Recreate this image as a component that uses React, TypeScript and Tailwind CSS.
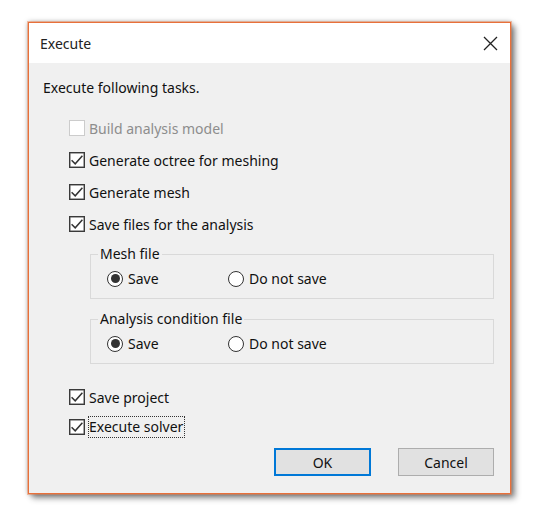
import React from "react";

function CheckBox({ checked, disabled }: { checked?: boolean; disabled?: boolean }) {
  return (
    <span
      className={`flex h-[16px] w-[16px] shrink-0 items-center justify-center border bg-white ${
        disabled ? "border-[#cccccc]" : "border-[#3a3a3a] shadow-[inset_0_0_0_0.5px_#555555]"
      }`}
    >
      {checked && (
        <svg width="14" height="14" viewBox="0 0 14 14" fill="none">
          <path d="M1.6 7.2 L5.2 10.8 L12.4 2.8" stroke="#333333" strokeWidth="1.5" />
        </svg>
      )}
    </span>
  );
}

function Radio({ checked }: { checked?: boolean }) {
  return (
    <span className="flex h-[16px] w-[16px] shrink-0 items-center justify-center rounded-full border border-[#333333] bg-white">
      {checked && <span className="h-[9px] w-[9px] rounded-full bg-[#333333]" />}
    </span>
  );
}

function CheckRow({ label, checked, disabled, focus }: { label: string; checked?: boolean; disabled?: boolean; focus?: boolean }) {
  return (
    <div className="flex h-[32px] items-center pl-[40px]">
      <CheckBox checked={checked} disabled={disabled} />
      <span
        className={`ml-[4px] ${disabled ? "text-[#8d8d8d]" : "text-[#111111]"} ${
          focus ? "outline outline-1 outline-dotted outline-[#333333] pr-[1px] leading-[20px]" : ""
        }`}
      >
        {label}
      </span>
    </div>
  );
}

function SaveGroup({ title }: { title: string }) {
  return (
    <fieldset className="ml-[61px] mr-[16px] h-[53px] border border-[#d9d9d9] pl-[7px]">
      <legend className="px-[2px] leading-[16px]">{title}</legend>
      <div className="mt-[6px] flex items-center pl-[9px]">
        <Radio checked />
        <span className="ml-[5px] w-[100px]">Save</span>
        <Radio />
        <span className="ml-[5px]">Do not save</span>
      </div>
    </fieldset>
  );
}

export default function App() {
  return (
    <div className="min-h-screen bg-white pl-[28px] pt-[22px]" style={{ fontFamily: '"Noto Sans", "Open Sans", sans-serif' }}>
      <div className="flex h-[472px] w-[483px] flex-col border border-[#e8703a] bg-[#f0f0f0] text-[14px] text-[#111111] shadow-[0_0_0_1px_rgba(240,130,80,0.45),0_0_5px_rgba(0,0,0,0.35),4px_4px_6px_rgba(0,0,0,0.45)]">
        {/* Title bar */}
        <div className="flex h-[40px] items-center justify-between bg-white pl-[11px] pr-[12px]">
          <span className="text-[14px] text-[#222222]">Execute</span>
          <svg width="15" height="15" viewBox="0 0 15 15" fill="none">
            <path d="M1 1 L14 14 M14 1 L1 14" stroke="#222222" strokeWidth="1.3" />
          </svg>
        </div>

        {/* Body */}
        <div className="flex flex-1 flex-col">
          <div className="pl-[14px] pt-[15px] leading-[20px]">Execute following tasks.</div>
          <div className="mt-[14px]">
            <CheckRow label="Build analysis model" disabled />
            <CheckRow label="Generate octree for meshing" checked />
            <CheckRow label="Generate mesh" checked />
            <CheckRow label="Save files for the analysis" checked />
          </div>
          <div className="mt-[6px]">
            <SaveGroup title="Mesh file" />
          </div>
          <div className="mt-[12px]">
            <SaveGroup title="Analysis condition file" />
          </div>
          <div className="mt-[17px]">
            <CheckRow label="Save project" checked />
            <div className="-mt-[2px]">
              <CheckRow label="Execute solver" checked focus />
            </div>
          </div>
          <div className="mt-[5px] flex justify-end gap-[27px] pr-[16px]">
            <button className="h-[28px] w-[97px] border-2 border-[#0078d7] bg-[#e1e1e1] text-[14px] text-[#111111]">OK</button>
            <button className="h-[28px] w-[96px] border border-[#adadad] bg-[#e1e1e1] text-[14px] text-[#111111]">Cancel</button>
          </div>
        </div>
      </div>
    </div>
  );
}
